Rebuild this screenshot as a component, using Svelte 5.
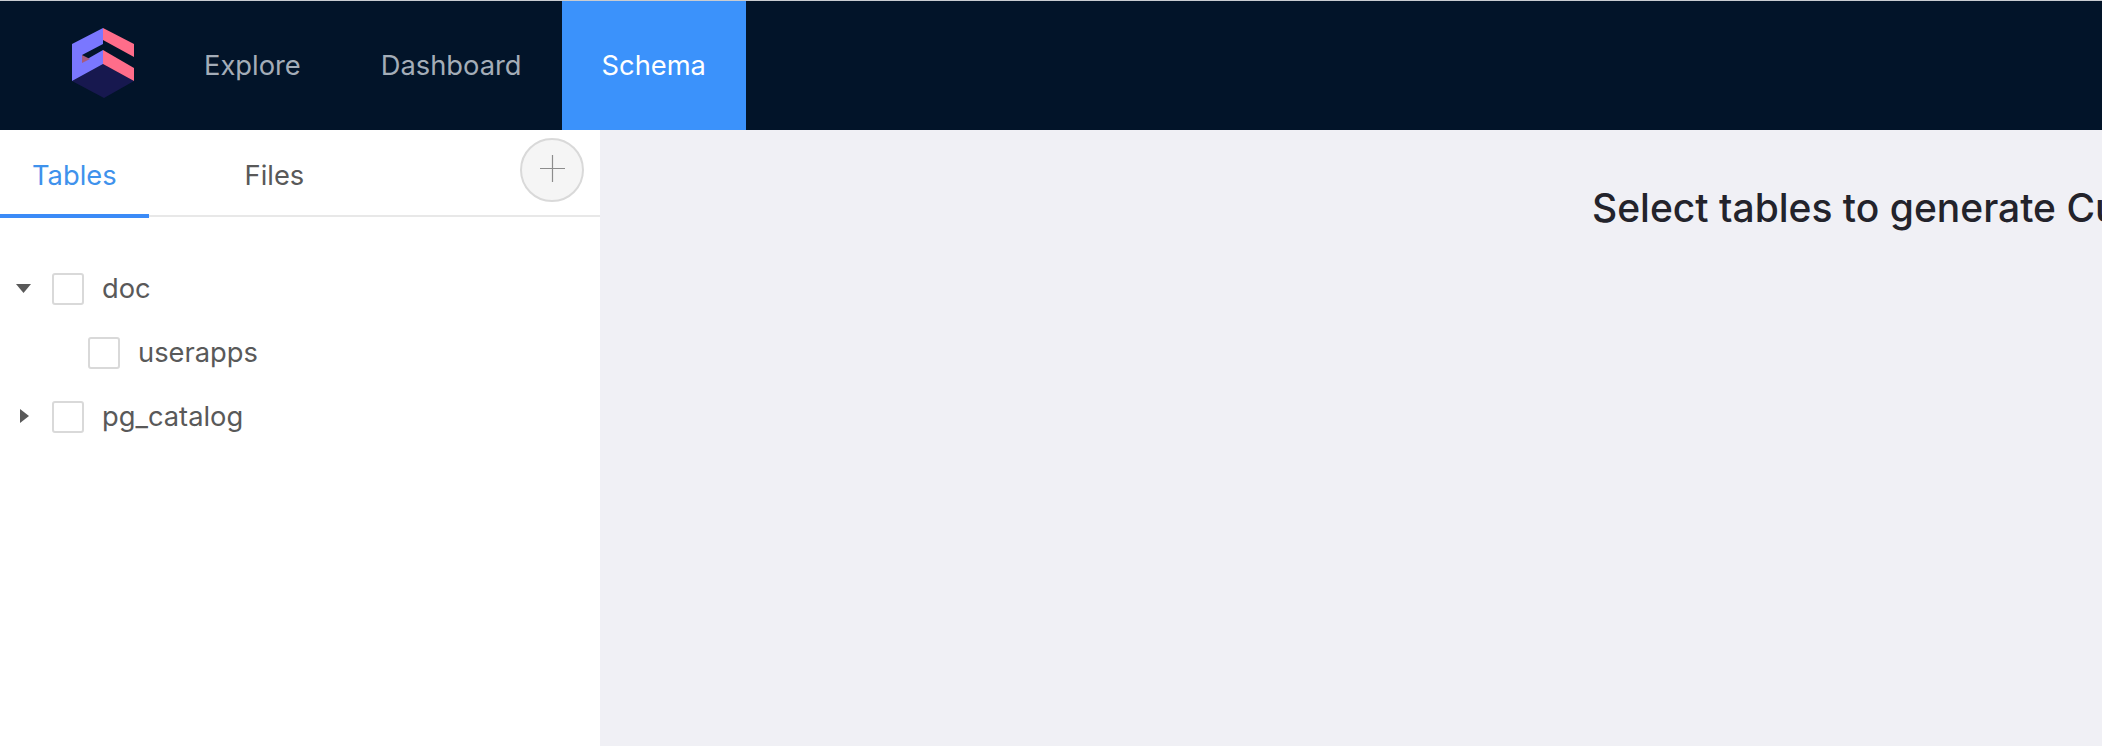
<script>
  const navItems = [
    { label: 'Explore', active: false },
    { label: 'Dashboard', active: false },
    { label: 'Schema', active: true }
  ];
  const tree = [
    { name: 'doc', open: true, children: ['userapps'] },
    { name: 'pg_catalog', open: false, children: [] }
  ];
</script>

<div class="page">
  <header class="topbar">
    <div class="logo">
      <svg width="62" height="70" viewBox="0 0 62 70" aria-hidden="true">
        <path d="M0 53 L31 36 L62 53 L32 70 Z" fill="#17184f" />
        <path d="M31 0 L0 16 L0 53 L31 36 L31 22 L10 34 L10 27 L31 16 Z" fill="#7a77ff" />
        <path d="M10 27 L18 31 L10 35 Z" fill="#a85a7c" />
        <path d="M31 0 L62 16 L62 29 L31 12 Z" fill="#ff6d8a" />
        <path d="M31 22 L62 40 L62 53 L31 36 Z" fill="#ff6d8a" />
      </svg>
    </div>
    <nav class="nav">
      {#each navItems as item}
        <div class="nav-item" class:active={item.active}>{item.label}</div>
      {/each}
    </nav>
  </header>

  <div class="body">
    <aside class="sidebar">
      <div class="tabs">
        <div class="tab active">Tables</div>
        <div class="tab">Files</div>
        <button type="button" class="add" aria-label="Add">
          <svg width="25" height="27" viewBox="0 0 25 27" aria-hidden="true">
            <path d="M12.5 0 V27 M0 13.5 H25" stroke="#8c8c8c" stroke-width="1.2" fill="none" />
          </svg>
        </button>
      </div>

      <div class="tree">
        {#each tree as node}
          <div class="row">
            <span class="caret">
              {#if node.open}
                <svg width="15" height="9" viewBox="0 0 15 9" aria-hidden="true"><path d="M0 0 H15 L7.5 9 Z" fill="#595959" /></svg>
              {:else}
                <svg class="closed" width="9" height="14" viewBox="0 0 9 14" aria-hidden="true"><path d="M0 0 L9 7 L0 14 Z" fill="#595959" /></svg>
              {/if}
            </span>
            <span class="check"></span>
            <span class="name">{node.name}</span>
          </div>
          {#if node.open}
            {#each node.children as child}
              <div class="row child">
                <span class="check"></span>
                <span class="name">{child}</span>
              </div>
            {/each}
          {/if}
        {/each}
      </div>
    </aside>

    <main class="content">
      <h2 class="prompt">Select tables to generate Cube Schema</h2>
    </main>
  </div>
</div>

<style>
  :global(body) {
    margin: 0;
    background: #f0f0f5;
  }
  .page {
    width: 2102px;
    height: 746px;
    overflow: hidden;
    display: flex;
    flex-direction: column;
    font-family: Inter, "Noto Sans", sans-serif;
    border-top: 1px solid #c9ccd1;
    box-sizing: border-box;
  }
  .topbar {
    height: 129px;
    flex-shrink: 0;
    background: #021429;
    display: flex;
  }
  .logo {
    width: 164px;
    padding: 27px 0 0 72px;
    box-sizing: border-box;
  }
  .logo svg {
    display: block;
  }
  .nav {
    display: flex;
  }
  .nav-item {
    padding: 0 40px;
    line-height: 129px;
    font-size: 27.3px;
    color: #a4adb8;
  }
  .nav-item.active {
    background: #3b92fb;
    color: #fff;
  }
  .body {
    flex: 1;
    display: flex;
    min-height: 0;
  }
  .sidebar {
    width: 600px;
    flex-shrink: 0;
    background: #fff;
  }
  .tabs {
    height: 87px;
    box-sizing: border-box;
    display: flex;
    position: relative;
    border-bottom: 2px solid #e8e8e8;
  }
  .tab {
    font-size: 27.3px;
    line-height: 92px;
    color: #595959;
    padding: 0 32px;
    margin-bottom: -2px;
  }
  .tab + .tab {
    margin-left: 64px;
  }
  .tab.active {
    color: #3f92ec;
    border-bottom: 4px solid #3b8bf7;
    height: 84px;
  }
  .add {
    position: absolute;
    right: 16px;
    top: 8px;
    width: 64px;
    height: 64px;
    padding: 0;
    border-radius: 50%;
    border: 2px solid #d9d9d9;
    background: #f5f5f5;
    display: flex;
    align-items: center;
    justify-content: center;
  }
  .add svg {
    margin-bottom: 4px;
  }
  .tree {
    padding-top: 39px;
  }
  .row {
    height: 64px;
    display: flex;
    align-items: center;
    padding-left: 16px;
    box-sizing: border-box;
  }
  .row.child {
    padding-left: 88px;
  }
  .caret {
    width: 36px;
    display: flex;
  }
  .closed {
    margin-left: 4px;
  }
  .check {
    width: 32px;
    height: 32px;
    box-sizing: border-box;
    border: 2px solid #d9d9d9;
    border-radius: 3px;
    background: #fff;
    flex-shrink: 0;
    position: relative;
    top: 1px;
  }
  .name {
    margin-left: 18px;
    font-size: 27.3px;
    color: #595959;
  }
  .content {
    flex: 1;
    min-width: 0;
    padding: 55px 0 0 992px;
    overflow: hidden;
  }
  .prompt {
    margin: 0;
    font-size: 39px;
    line-height: 46px;
    font-weight: 450;
    color: #23232b;
    white-space: nowrap;
  }
</style>
